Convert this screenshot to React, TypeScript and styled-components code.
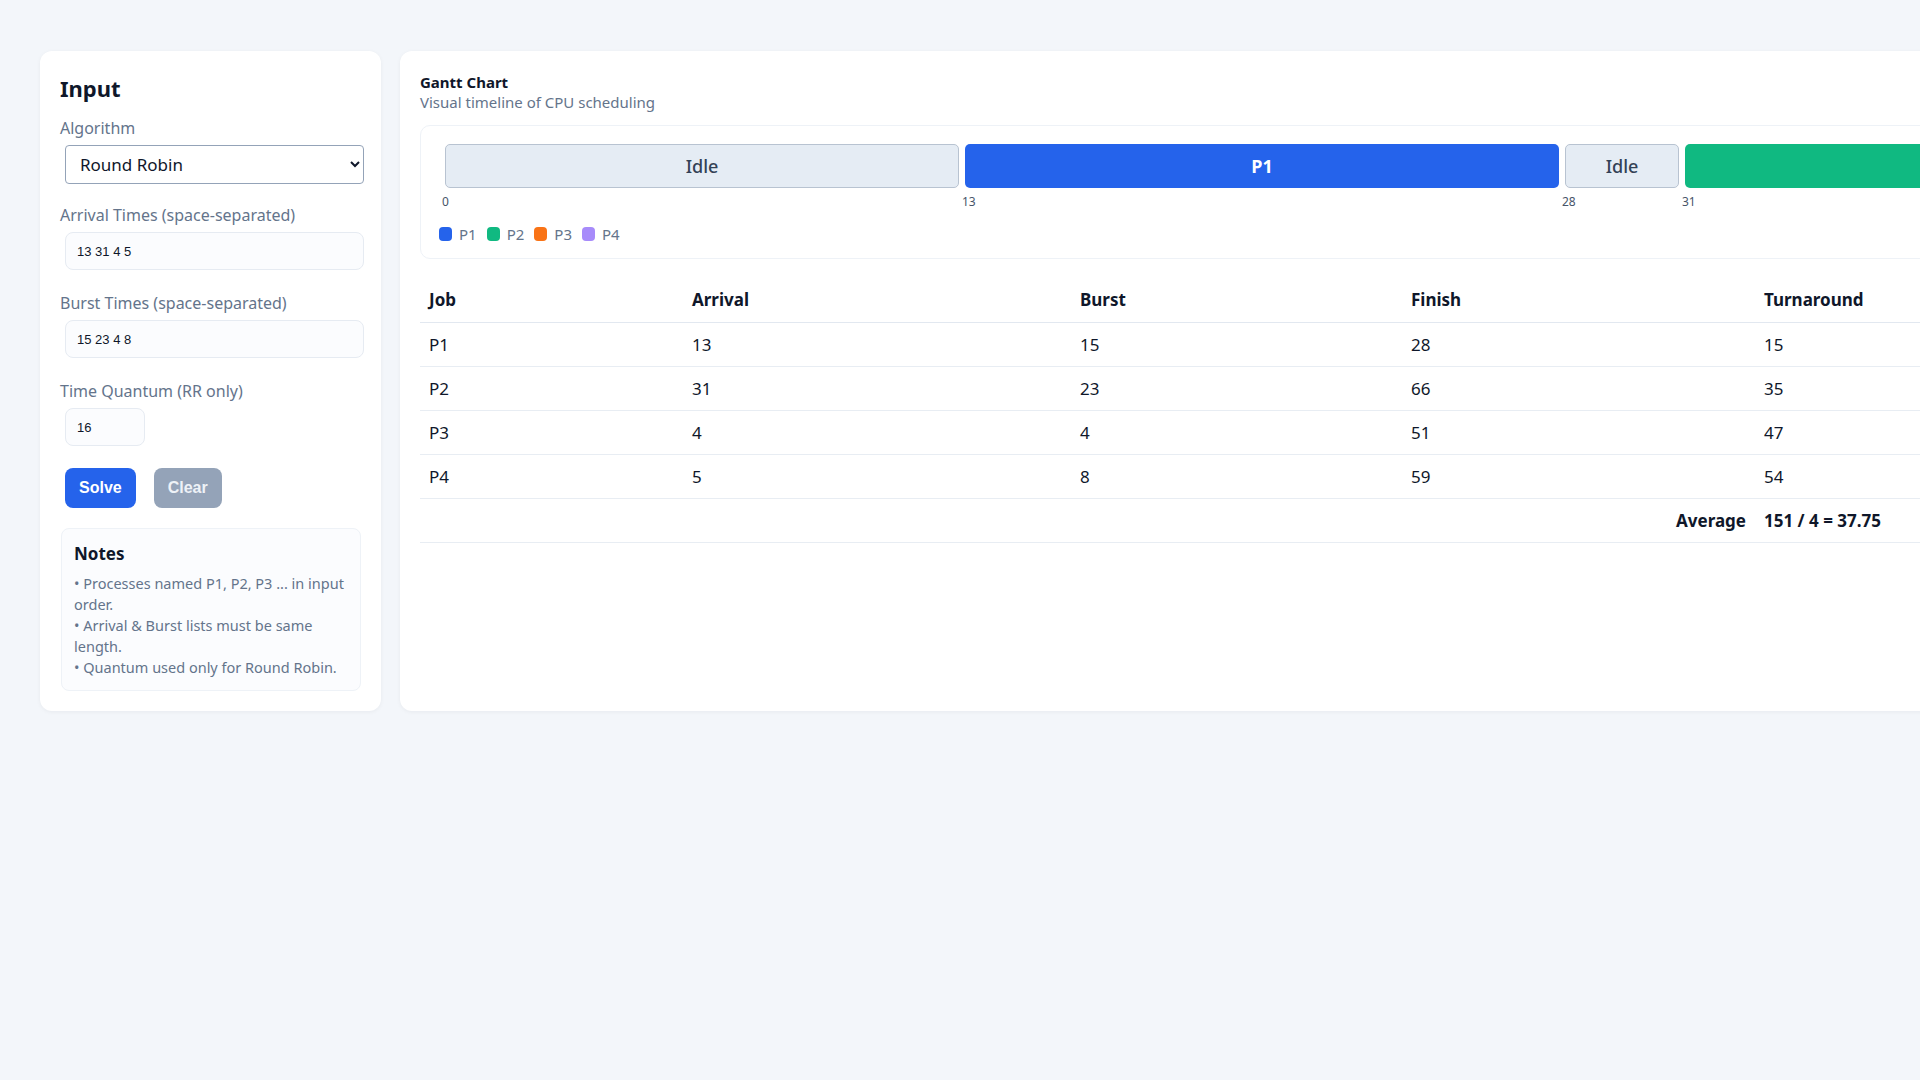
import styled, { createGlobalStyle } from "styled-components";

const Global = createGlobalStyle`
  html, body { margin: 0; background: #f3f6fa; }
  body { font-family: "Noto Sans", "Open Sans", sans-serif; color: #0f172a; }
`;

const UNIT = 40;

const COLORS: Record<string, string> = {
  P1: "#2563eb",
  P2: "#10b981",
  P3: "#f97316",
  P4: "#a78bfa",
};

const segments = [
  { job: "Idle", start: 0, end: 13 },
  { job: "P1", start: 13, end: 28 },
  { job: "Idle", start: 28, end: 31 },
  { job: "P2", start: 31, end: 47 },
  { job: "P3", start: 47, end: 51 },
  { job: "P4", start: 51, end: 59 },
  { job: "P2", start: 59, end: 66 },
];

const rows = [
  { job: "P1", arrival: 13, burst: 15, finish: 28, tat: 15, wait: 0 },
  { job: "P2", arrival: 31, burst: 23, finish: 66, tat: 35, wait: 12 },
  { job: "P3", arrival: 4, burst: 4, finish: 51, tat: 47, wait: 43 },
  { job: "P4", arrival: 5, burst: 8, finish: 59, tat: 54, wait: 46 },
];

const Page = styled.div`
  display: flex;
  align-items: stretch;
  gap: 19px;
  padding: 51px 40px;
  width: max-content;
`;

const Card = styled.div`
  background: #fff;
  border-radius: 12px;
  box-shadow: 0 1px 4px rgba(15, 23, 42, 0.05);
`;

const InputCard = styled(Card)`
  width: 301px;
  padding: 22px 20px 20px;
  flex-shrink: 0;
`;

const Title = styled.h2`
  margin: 0 0 14px;
  font-size: 22px;
  font-weight: 700;
`;

const Label = styled.div`
  font-size: 16px;
  color: #64748b;
  margin: 0 0 6px;
`;

const Select = styled.select`
  display: block;
  margin: 0 0 20px 5px;
  width: 299px;
  height: 39px;
  padding: 0 10px;
  font-family: inherit;
  font-size: 17px;
  color: #0f172a;
  border: 1px solid #94a3b8;
  border-radius: 4px;
  background: #fff;
`;

const TextInput = styled.input<{ $w?: number }>`
  display: block;
  margin: 0 0 22px 5px;
  width: ${(p) => p.$w ?? 299}px;
  height: 38px;
  box-sizing: border-box;
  padding: 0 11px;
  font-family: "Liberation Sans", sans-serif;
  font-size: 13px;
  color: #0f172a;
  border: 1px solid #e6ebf2;
  border-radius: 8px;
  background: #fbfcfe;
`;

const Buttons = styled.div`
  display: flex;
  gap: 18px;
  margin: 4px 0 20px 5px;
`;

const Button = styled.button<{ $primary?: boolean }>`
  height: 40px;
  padding: 0 14px;
  border: none;
  border-radius: 8px;
  font-family: "Liberation Sans", sans-serif;
  font-weight: 700;
  font-size: 16px;
  color: ${(p) => (p.$primary ? "#fff" : "#eef2f7")};
  background: ${(p) => (p.$primary ? "#2563eb" : "#94a3b8")};
`;

const Notes = styled.div`
  margin-left: 1px;
  border: 1px solid #eef2f7;
  border-radius: 8px;
  background: #fbfcfe;
  padding: 13px 16px 12px 12px;
`;

const NotesTitle = styled.div`
  font-size: 17px;
  font-weight: 700;
  margin-bottom: 8px;
`;

const Note = styled.div`
  font-size: 14.5px;
  line-height: 21px;
  color: #64748b;
`;

const ChartCard = styled(Card)`
  padding: 21px 20px;
`;

const ChartTitle = styled.div`
  font-size: 15px;
  font-weight: 700;
`;

const Sub = styled.div`
  font-size: 15px;
  color: #64748b;
  margin-bottom: 13px;
`;

const GanttBox = styled.div`
  border: 1px solid #eef2f7;
  border-radius: 10px;
  padding: 18px 24px 14px;
`;

const Track = styled.div`
  display: flex;
`;

const Segment = styled.div<{ $w: number }>`
  width: ${(p) => p.$w}px;
  flex-shrink: 0;
  display: flex;
  flex-direction: column;
`;

const Bar = styled.div<{ $color?: string }>`
  height: 44px;
  margin-right: 6px;
  box-sizing: border-box;
  border-radius: 5px;
  display: flex;
  align-items: center;
  justify-content: center;
  font-size: 18px;
  font-weight: ${(p) => (p.$color ? 700 : 500)};
  color: ${(p) => (p.$color ? "#fff" : "#334155")};
  background: ${(p) => p.$color ?? "#e5ecf4"};
  border: ${(p) => (p.$color ? "none" : "1px solid #b8c3d1")};
`;

const Spacer = styled.div`
  height: 44px;
`;

const Tick = styled.div`
  font-size: 12px;
  color: #475569;
  margin-top: 5px;
  transform: translateX(-3px);
`;

const Legend = styled.div`
  display: flex;
  gap: 10px;
  margin: 14px 0 0 -6px;
`;

const LegendItem = styled.div`
  display: flex;
  align-items: center;
  gap: 7px;
  font-size: 15px;
  color: #64748b;
`;

const Swatch = styled.span<{ $c: string }>`
  width: 13px;
  height: 14px;
  border-radius: 4px;
  background: ${(p) => p.$c};
`;

const Table = styled.table`
  margin-top: 18px;
  width: 100%;
  table-layout: fixed;
  border-collapse: collapse;
  font-size: 17px;
  text-align: left;
`;

const Th = styled.th<{ $w?: number }>`
  width: ${(p) => (p.$w ? `${p.$w}px` : "auto")};
  font-weight: 700;
  padding: 0 9px;
  height: 45px;
  border-bottom: 1px solid #e2e8f0;
`;

const Td = styled.td<{ $bold?: boolean; $right?: boolean }>`
  padding: 0 9px;
  height: 43px;
  border-bottom: 1px solid #e8edf3;
  font-weight: ${(p) => (p.$bold ? 700 : 400)};
  text-align: ${(p) => (p.$right ? "right" : "left")};
`;

export default function App() {
  return (
    <>
      <Global />
      <Page>
        <InputCard>
          <Title>Input</Title>
          <Label>Algorithm</Label>
          <Select defaultValue="rr">
            <option value="fcfs">First Come First Serve</option>
            <option value="rr">Round Robin</option>
          </Select>
          <Label>Arrival Times (space-separated)</Label>
          <TextInput defaultValue="13 31 4 5" />
          <Label>Burst Times (space-separated)</Label>
          <TextInput defaultValue="15 23 4 8" />
          <Label>Time Quantum (RR only)</Label>
          <TextInput $w={80} defaultValue="16" />
          <Buttons>
            <Button $primary>Solve</Button>
            <Button>Clear</Button>
          </Buttons>
          <Notes>
            <NotesTitle>Notes</NotesTitle>
            <Note>• Processes named P1, P2, P3 ... in input order.</Note>
            <Note>• Arrival &amp; Burst lists must be same length.</Note>
            <Note>• Quantum used only for Round Robin.</Note>
          </Notes>
        </InputCard>
        <ChartCard>
          <ChartTitle>Gantt Chart</ChartTitle>
          <Sub>Visual timeline of CPU scheduling</Sub>
          <GanttBox>
            <Track>
              {segments.map((s, i) => (
                <Segment key={i} $w={(s.end - s.start) * UNIT}>
                  <Bar $color={COLORS[s.job]}>{s.job}</Bar>
                  <Tick>{s.start}</Tick>
                </Segment>
              ))}
              <Segment $w={20}>
                <Spacer />
                <Tick>66</Tick>
              </Segment>
            </Track>
            <Legend>
              {Object.entries(COLORS).map(([k, c]) => (
                <LegendItem key={k}>
                  <Swatch $c={c} />
                  {k}
                </LegendItem>
              ))}
            </Legend>
          </GanttBox>
          <Table>
            <thead>
              <tr>
                <Th $w={245}>Job</Th>
                <Th $w={370}>Arrival</Th>
                <Th $w={313}>Burst</Th>
                <Th $w={335}>Finish</Th>
                <Th $w={320}>Turnaround</Th>
                <Th>Waiting</Th>
              </tr>
            </thead>
            <tbody>
              {rows.map((r) => (
                <tr key={r.job}>
                  <Td>{r.job}</Td>
                  <Td>{r.arrival}</Td>
                  <Td>{r.burst}</Td>
                  <Td>{r.finish}</Td>
                  <Td>{r.tat}</Td>
                  <Td>{r.wait}</Td>
                </tr>
              ))}
              <tr>
                <Td />
                <Td />
                <Td />
                <Td $bold $right>Average</Td>
                <Td $bold>151 / 4 = 37.75</Td>
                <Td $bold>101 / 4 = 25.25</Td>
              </tr>
            </tbody>
          </Table>
        </ChartCard>
      </Page>
    </>
  );
}
